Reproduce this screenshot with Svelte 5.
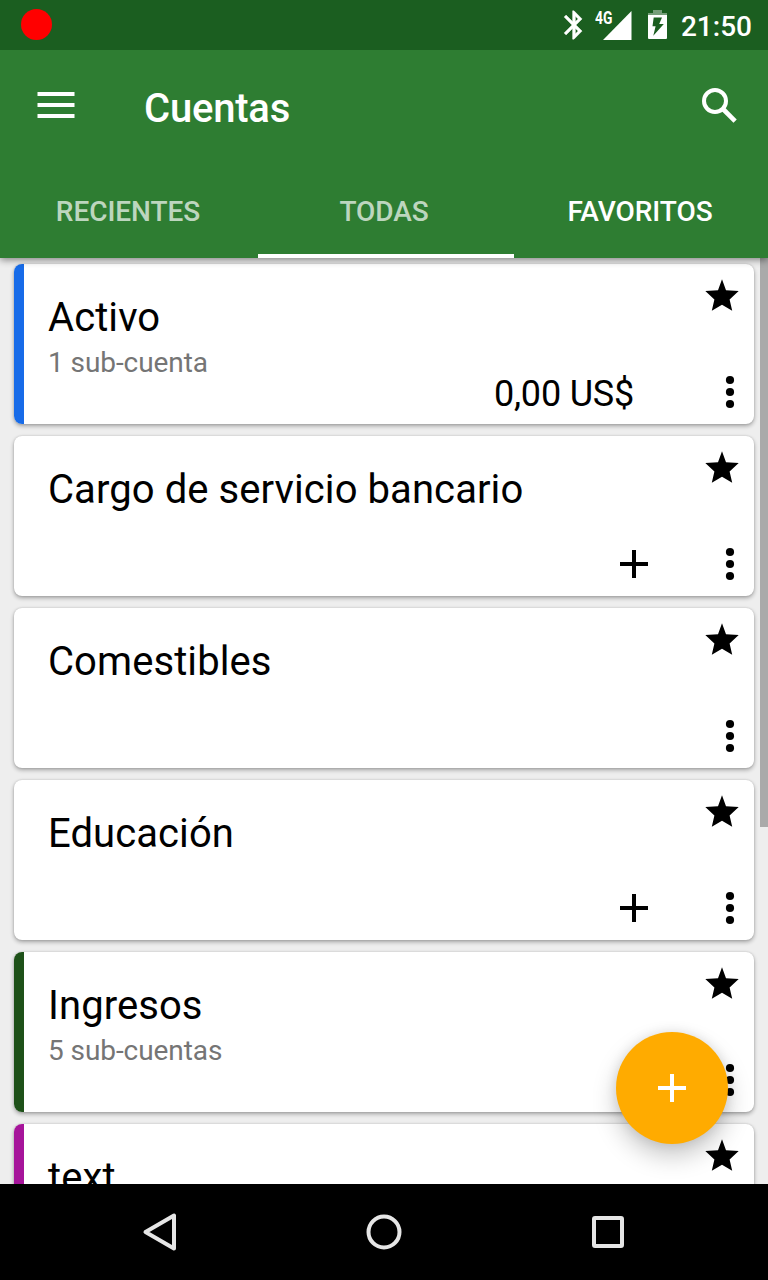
<script>
  const accounts = [
    { name: 'Activo', sub: '1 sub-cuenta', color: '#176be8', balance: '0,00 US$' },
    { name: 'Cargo de servicio bancario', add: true },
    { name: 'Comestibles' },
    { name: 'Educación', add: true },
    { name: 'Ingresos', sub: '5 sub-cuentas', color: '#1e5119' },
    { name: 'text', color: '#a6149a' }
  ];
  const tabs = ['Recientes', 'Todas', 'Favoritos'];
</script>

<div class="screen">
  <div class="status">
    <span class="record"></span>
    <svg class="bt" width="34" height="34" viewBox="0 0 24 24"><path fill="#fff" stroke="#fff" stroke-width=".3" d="M17.71 7.71L12 2h-1v7.59L6.41 5 5 6.41 10.59 12 5 17.59 6.41 19 11 14.41V22h1l5.71-5.71-4.3-4.29 4.3-4.29zM13 5.83l1.88 1.88L13 9.59V5.83zm1.88 10.46L13 18.17v-3.76l1.88 1.88z"/></svg>
    <span class="signal">
      <svg width="29" height="29" viewBox="0 0 29 29"><path fill="#fff" d="M28.5 0v29H0z"/></svg>
      <span class="net">4G</span>
    </span>
    <svg class="battery" width="19" height="29" viewBox="0 0 19 29">
      <path fill="#fff" fill-opacity=".4" d="M5 0h9v3h5v2H0V3h5z"/>
      <path fill="#fff" fill-rule="evenodd" d="M0 5h19v23a1 1 0 0 1-1 1H1a1 1 0 0 1-1-1zM5.7 7.5L4.5 16.3H7.6L5.3 25.8 15.8 14h-4.6L14 7.5z"/>
    </svg>
    <span class="clock">21:50</span>
  </div>
  <header>
    <div class="toolbar">
      <svg width="38" height="26" viewBox="0 0 38 26"><path fill="#fff" d="M.5 0h37v4H.5zM.5 11h37v4H.5zM.5 22h37v4H.5z"/></svg>
      <h1>Cuentas</h1>
      <svg class="search" width="36" height="36" viewBox="0 0 36 36" fill="none" stroke="#fff"><circle cx="13" cy="13" r="11" stroke-width="4"/><path stroke-width="4.6" d="M21.5 21.5l11.6 11.6"/></svg>
    </div>
    <nav>
      {#each tabs as tab, i}
        <button class:lit={i === 2}>{tab}</button>
      {/each}
    </nav>
  </header>
  <main>
    <div class="list">
      {#each accounts as a}
        <article>
          <span class="stripe" style:background={a.color ?? 'transparent'}></span>
          <div class="info">
            <h2>{a.name}</h2>
            {#if a.sub}<p>{a.sub}</p>{/if}
          </div>
          <div class="side">
            <svg class="star" width="34" height="32" viewBox="0 0 34 32"><path d="M17 .3l4 11 12.7.7-9.1 8.4 2.6 11.4L17 25.8 6.8 31.8l2.6-11.4L.3 12l12.7-.7z"/></svg>
            <div class="actions">
              {#if a.balance}<span class="balance">{a.balance}</span>{/if}
              {#if a.add}<svg class="add" width="28" height="28" viewBox="0 0 28 28"><path d="M12 0h4v12h12v4H16v12h-4V16H0v-4h12z"/></svg>{/if}
              <svg width="8" height="32" viewBox="0 0 8 32"><circle cx="4" cy="4" r="4.1"/><circle cx="4" cy="16" r="4.1"/><circle cx="4" cy="28" r="4.1"/></svg>
            </div>
          </div>
        </article>
      {/each}
    </div>
    <div class="scrollbar"></div>
    <button class="fab" aria-label="+">
      <svg width="28" height="28" viewBox="0 0 28 28"><path fill="#fff" d="M12 0h4v12h12v4H16v12h-4V16H0v-4h12z"/></svg>
    </button>
  </main>
  <footer>
    <svg width="40" height="40" viewBox="0 0 40 40"><path d="M5.5 20L34 3.5v33z"/></svg>
    <svg width="40" height="40" viewBox="0 0 40 40"><circle cx="20" cy="20" r="15.5"/></svg>
    <svg width="40" height="40" viewBox="0 0 40 40"><rect x="6" y="6" width="28" height="28" rx="1"/></svg>
  </footer>
</div>

<style>
  :global(body) { margin: 0; }
  .screen { width: 768px; height: 1280px; display: flex; flex-direction: column; overflow: hidden; font-family: Roboto, sans-serif; background: #eee; }
  svg { display: block; flex: none; overflow: visible; }
  button { font: inherit; border: 0; padding: 0; background: none; }
  .status { height: 50px; flex: none; box-sizing: border-box; background: #1b5e20; display: flex; align-items: center; padding: 0 16px 0 21px; position: relative; z-index: 3; }
  .record { width: 31px; height: 31px; border-radius: 50%; background: #f00; margin: 0 auto 1px 0; }
  .bt { margin-right: 12px; }
  .signal { position: relative; margin-right: 16px; }
  .net { position: absolute; left: -7.5px; top: -2px; font: 700 18px/18px Roboto, sans-serif; color: #fff; transform: scaleX(.77); transform-origin: 0 0; }
  .battery { margin: 0 14px 1px 0; }
  .clock { color: #fff; font-size: 28px; font-weight: 500; line-height: 50px; position: relative; top: 2px; }
  header { height: 208px; flex: none; background: #2e7d32; position: relative; z-index: 2; box-shadow: 0 2px 7px rgba(0,0,0,.45); }
  .toolbar { height: 112px; display: flex; align-items: center; box-sizing: border-box; padding: 0 30px 2px 37px; }
  .search { margin-top: 2px; }
  h1 { margin: 8px auto 0 69px; font-size: 40px; line-height: 48px; font-weight: 500; letter-spacing: -.2px; color: #fff; }
  nav { height: 96px; display: grid; grid-template-columns: 256px 256px 256px; background: linear-gradient(#fff, #fff) 258px 92px / 256px 4px no-repeat; }
  nav button { color: rgba(255,255,255,.7); text-transform: uppercase; font-size: 28px; font-weight: 500; line-height: 34px; padding-bottom: -1px; margin-top: 2px; height: 96px; letter-spacing: -.05px; }
  nav button.lit { color: #fff; }
  main { flex: 1; min-height: 0; position: relative; overflow: hidden; }
  .list { display: flex; flex-direction: column; gap: 12px; padding: 6px 14px; }
  article { height: 160px; flex: none; box-sizing: border-box; background: #fff; border-radius: 8px; display: flex; box-shadow: 0 2px 4px rgba(0,0,0,.32), 0 0 2px rgba(0,0,0,.15); }
  .stripe { width: 10px; border-radius: 8px 0 0 8px; }
  .info { flex: 1; padding: 30px 0 0 24px; white-space: nowrap; }
  h2 { margin: 0; font-size: 40px; line-height: 47px; font-weight: 400; letter-spacing: .08px; color: #000; }
  p { margin: 5px 0 0; font-size: 28px; line-height: 33px; letter-spacing: -.07px; color: #757575; }
  .side { display: flex; flex-direction: column; align-items: flex-end; justify-content: space-between; padding: 15px 15px 16px 0; }
  .actions { display: flex; align-items: center; padding-right: 5px; }
  .balance { font-size: 36px; line-height: 32px; margin-right: 92px; letter-spacing: -.2px; color: #000; position: relative; top: 2px; }
  .add { margin-right: 78px; }
  .scrollbar { position: absolute; right: 0; top: 0; width: 8px; height: 569px; background: #aaa; }
  .fab { position: absolute; left: 616px; top: 774px; width: 112px; height: 112px; border-radius: 50%; background: #ffab00; display: flex; align-items: center; justify-content: center; box-shadow: 0 12px 24px rgba(0,0,0,.22), 0 0 12px rgba(0,0,0,.1); }
  footer { height: 96px; flex: none; background: #000; display: flex; justify-content: center; align-items: center; gap: 184px; position: relative; z-index: 3; }
  footer svg { fill: none; stroke: #e6e6e6; stroke-width: 4; stroke-linejoin: round; }
</style>
